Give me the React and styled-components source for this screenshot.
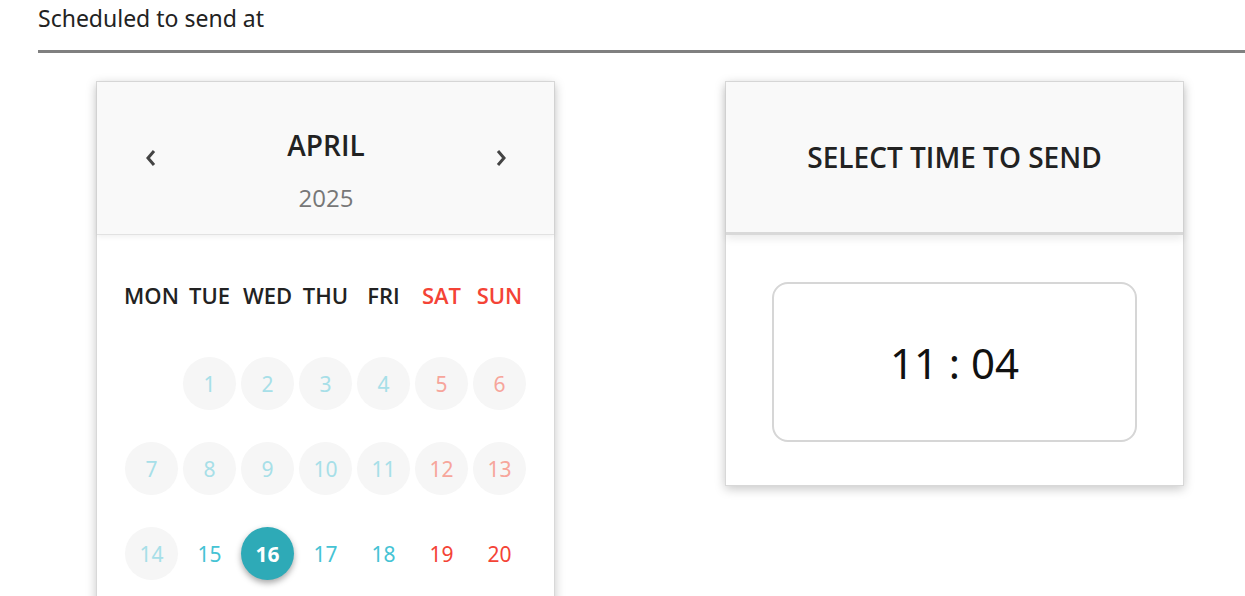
import React from "react";
import styled, { createGlobalStyle } from "styled-components";

const GlobalStyle = createGlobalStyle`
  html, body {
    margin: 0;
    padding: 0;
    background: #fff;
    overflow: hidden;
  }
  body {
    font-family: "Open Sans", "Noto Sans", sans-serif;
    color: #222;
  }
`;

//.........Page...............
const Page = styled.div`
  padding-left: 38px;
`;
const Title = styled.div`
  font-family: "Noto Sans", "Open Sans", sans-serif;
  font-size: 23px;
  line-height: 36px;
  color: #222;
  padding-bottom: 14px;
  border-bottom: 3px solid #808080;
`;
const CardsRow = styled.div`
  display: flex;
  gap: 170px;
  margin-top: 28px;
  padding-left: 58px;
  align-items: flex-start;
`;
const Card = styled.div`
  width: 459px;
  box-sizing: border-box;
  background: #fff;
  border: 1px solid #d8d8d8;
  box-shadow: 0 3px 10px rgba(0, 0, 0, 0.22);
`;

//.........Calendar...............
const CalHeader = styled.div`
  height: 153px;
  background: #f9f9f9;
  border-bottom: 1px solid #e2e2e2;
  box-shadow: 0 2px 5px rgba(0, 0, 0, 0.06);
  display: flex;
  justify-content: space-between;
  padding: 0 47px 0 48px;
  box-sizing: border-box;
`;
const Arrow = styled.div`
  align-self: center;
  display: flex;
  margin-top: 0;
  cursor: pointer;
`;
const MonthCol = styled.div`
  display: flex;
  flex-direction: column;
  align-items: center;
  padding-top: 46px;
`;
const Month = styled.div`
  font-size: 28px;
  font-weight: 600;
  line-height: 34px;
  color: #222;
`;
const Year = styled.div`
  font-size: 24px;
  line-height: 30px;
  margin-top: 21px;
  color: #777;
`;
const CalBody = styled.div`
  padding: 46px 0 30px;
  display: flex;
  flex-direction: column;
  align-items: center;
`;
const Grid = styled.div`
  display: grid;
  grid-template-columns: repeat(7, 58px);
  row-gap: ${(p) => p.$rowGap}px;
  justify-items: center;
  align-items: center;
  margin-top: ${(p) => p.$top || 0}px;
`;
const WeekDay = styled.div`
  font-size: 22px;
  font-weight: 600;
  line-height: 28px;
  white-space: nowrap;
  color: ${(p) => (p.$weekend ? "#f44336" : "#222")};
`;
const Day = styled.div`
  width: 53px;
  height: 53px;
  border-radius: 50%;
  display: flex;
  align-items: center;
  justify-content: center;
  font-size: 21px;
  font-family: "Noto Sans", "Open Sans", sans-serif;
  background: ${(p) =>
    p.$selected ? "#2eaab7" : p.$past ? "#f6f6f6" : "transparent"};
  color: ${(p) =>
    p.$selected
      ? "#fff"
      : p.$past
      ? p.$weekend
        ? "#f7a59b"
        : "#a7dfe8"
      : p.$weekend
      ? "#f44336"
      : "#45c3d4"};
  font-weight: ${(p) => (p.$selected ? 700 : 400)};
  box-shadow: ${(p) => (p.$selected ? "0 3px 6px rgba(0,0,0,0.35)" : "none")};
`;

//.........Time...............
const TimeHeader = styled.div`
  height: 150px;
  background: #f9f9f9;
  border-bottom: 3px solid #d9d9d9;
  box-shadow: 0 4px 8px rgba(0, 0, 0, 0.08);
  display: flex;
  align-items: center;
  justify-content: center;
  font-size: 28px;
  font-weight: 600;
  color: #222;
`;
const TimeBody = styled.div`
  padding: 47px 0 43px;
  display: flex;
  justify-content: center;
`;
const TimeBox = styled.div`
  width: 365px;
  height: 160px;
  box-sizing: border-box;
  border: 2px solid #d6d6d6;
  border-radius: 16px;
  display: flex;
  align-items: center;
  justify-content: center;
  font-family: "Noto Sans", "Open Sans", sans-serif;
  font-size: 42px;
  color: #111;
`;

const Chevron = ({ left }) => (
  <svg width="12" height="18" viewBox="0 0 12 18">
    <polyline
      points={left ? "9,2 3,9 9,16" : "3,2 9,9 3,16"}
      fill="none"
      stroke="#444"
      strokeWidth="3"
    />
  </svg>
);

const weekDays = ["MON", "TUE", "WED", "THU", "FRI", "SAT", "SUN"];

const App = () => {
  // April 2025 starts on a Tuesday
  const cells = [null];
  for (let d = 1; d <= 30; d++) cells.push(d);

  return (
    <>
      <GlobalStyle />
      <Page>
        <Title>Scheduled to send at</Title>
        <CardsRow>
          <Card>
            <CalHeader>
              <Arrow>
                <Chevron left />
              </Arrow>
              <MonthCol>
                <Month>APRIL</Month>
                <Year>2025</Year>
              </MonthCol>
              <Arrow>
                <Chevron />
              </Arrow>
            </CalHeader>
            <CalBody>
              <Grid $rowGap={0}>
                {weekDays.map((w, i) => (
                  <WeekDay key={w} $weekend={i > 4}>
                    {w}
                  </WeekDay>
                ))}
              </Grid>
              <Grid $rowGap={32} $top={48}>
                {cells.map((d, i) =>
                  d === null ? (
                    <div key={`e-${i}`} />
                  ) : (
                    <Day
                      key={d}
                      $past={d < 15}
                      $selected={d === 16}
                      $weekend={i % 7 > 4}
                    >
                      {d}
                    </Day>
                  )
                )}
              </Grid>
            </CalBody>
          </Card>
          <Card>
            <TimeHeader>SELECT TIME TO SEND</TimeHeader>
            <TimeBody>
              <TimeBox>11 : 04</TimeBox>
            </TimeBody>
          </Card>
        </CardsRow>
      </Page>
    </>
  );
};

export default App;
